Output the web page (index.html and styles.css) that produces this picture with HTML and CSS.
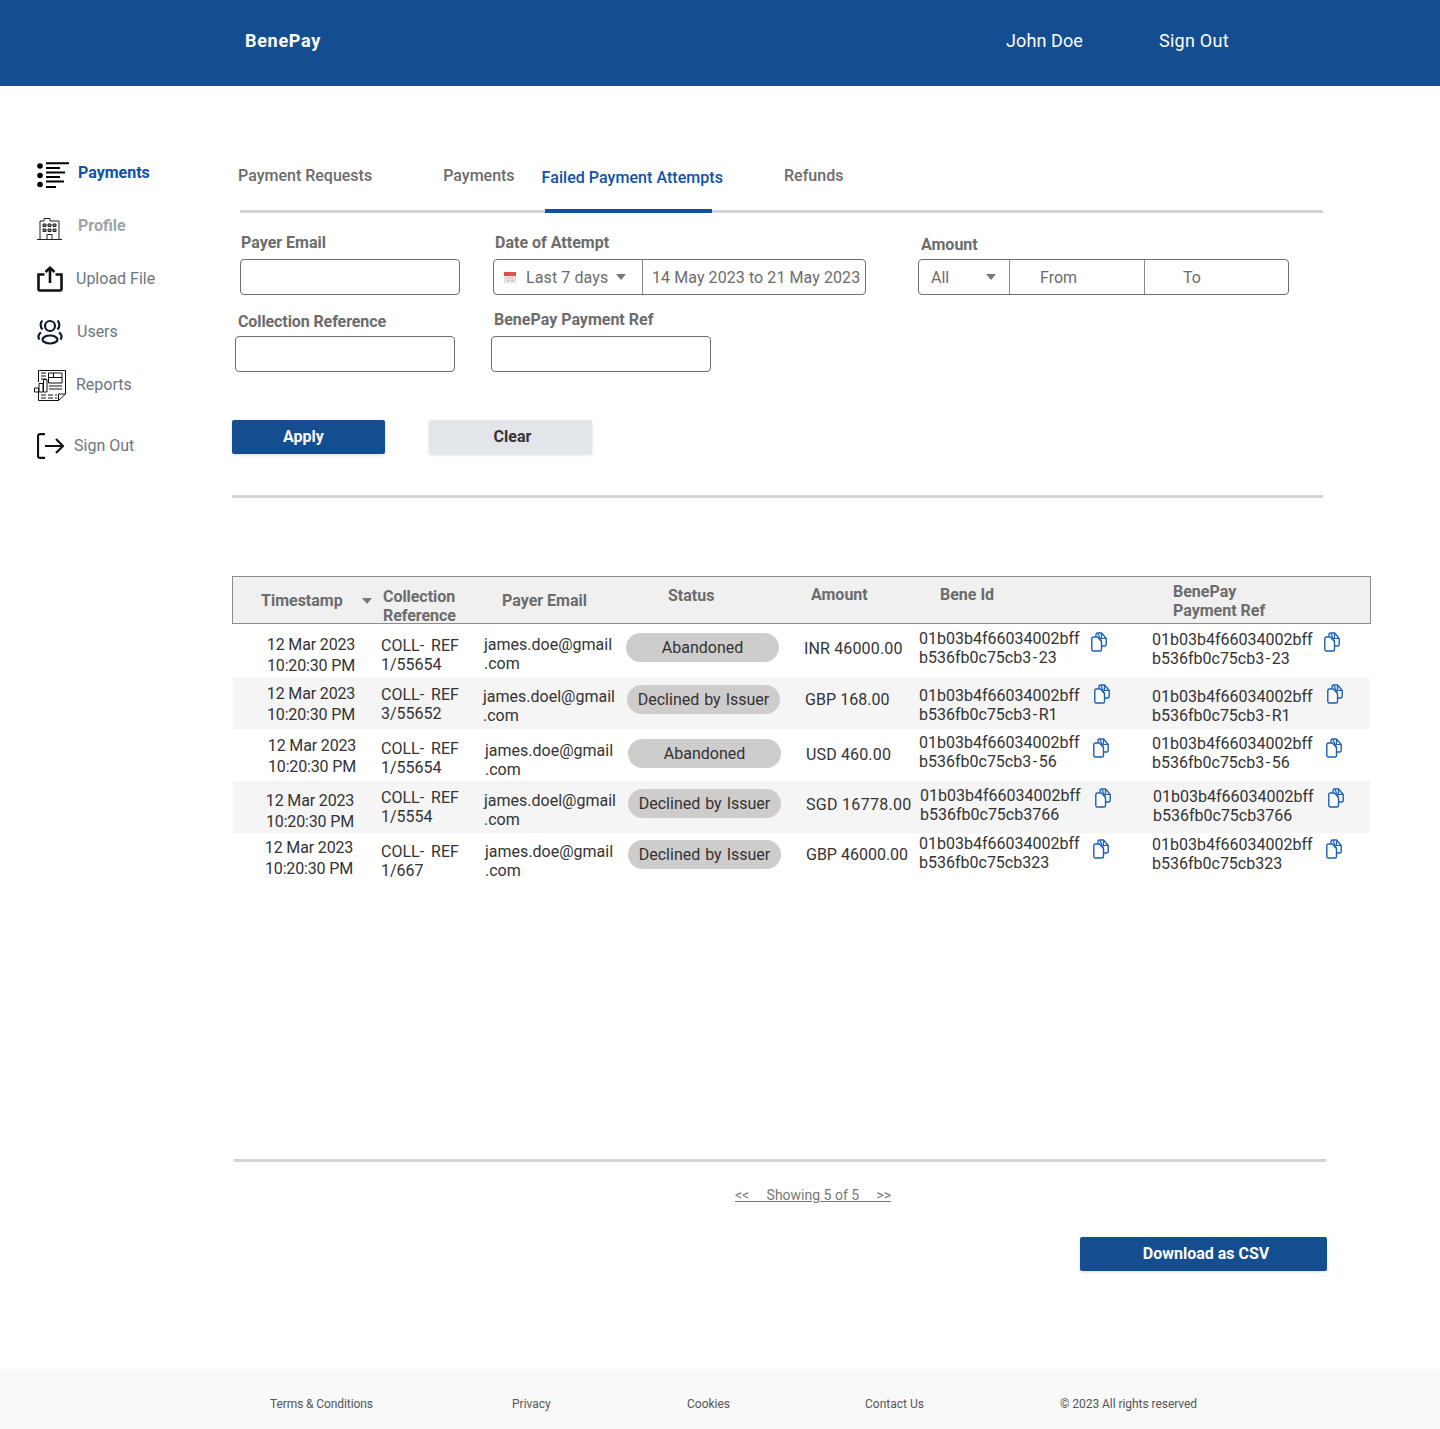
FILE: index.html
```html
<!DOCTYPE html>
<html lang="en">
<head>
    <meta charset="UTF-8">
    <meta name="viewport" content="width=device-width, initial-scale=1.0">
    <title>BenePay - Failed Payment Attempts</title>
    <link rel="stylesheet" href="styles.css">
</head>
<body>
    <svg class="defs" width="0" height="0">
        <symbol id="copy" viewBox="0 0 16 20">
            <path d="M5 4.500V2.500A1.500 1.500 0 0 1 6.500 1h4l4.700 5.500v6a1.500 1.500 0 0 1-1.500 1.500H11" fill="none" stroke="#1b5fb5" stroke-width="1.400"/>
            <path d="M2.300 5h4.200l4 4.500v8a1.500 1.500 0 0 1-1.500 1.500H2.300a1.500 1.500 0 0 1-1.500-1.500v-11A1.500 1.500 0 0 1 2.300 5z" fill="#fff" stroke="#1b5fb5" stroke-width="1.400"/>
            <path d="M7 1.500l3.500 8M10.500 1.500v5H15" fill="none" stroke="#1b5fb5" stroke-width="1.200"/>
        </symbol>
    </svg>

    <header class="topbar">
        <span class="brand">BenePay</span>
        <span class="user">John Doe</span>
        <span class="signout-top">Sign Out</span>
    </header>

    <div class="page">
        <!-- sidebar -->
        <nav class="sidebar">
            <a class="nav-item nav-payments">
                <svg class="nav-icon" width="32" height="27" viewBox="0 0 32 27">
                    <circle cx="3" cy="4" r="2.800"/><circle cx="3" cy="13.500" r="2.800"/><circle cx="3" cy="22.500" r="2.800"/>
                    <path d="M9 1.200h23M9 6h14M9 10.500h19M9 15h14M9 19.500h18M9 25h10" fill="none" stroke="#000" stroke-width="2"/>
                </svg>
                <span>Payments</span>
            </a>
            <a class="nav-item nav-profile">
                <svg class="nav-icon" width="26" height="24" viewBox="0 0 26 24" fill="none" stroke="#222" stroke-width="1">
                    <path d="M0 22.500h25M3 22.500V4h4V1.500h6V4h9v18.500M10 22.500v-5h5v5"/>
                    <path d="M6 7h3v2.500H6zM11 7h3v2.500h-3zM16 7h3v2.500h-3zM6 12h3v2.500H6zM11 12h3v2.500h-3zM16 12h3v2.500h-3z" fill="#888"/>
                </svg>
                <span>Profile</span>
            </a>
            <a class="nav-item nav-upload">
                <svg class="nav-icon" width="26" height="26" viewBox="0 0 26 26" fill="none" stroke="#111" stroke-width="2.600">
                    <path d="M7.500 8.500H1.500V23a1.500 1.500 0 0 0 1.500 1.500h20a1.500 1.500 0 0 0 1.500-1.500V8.500h-6"/>
                    <path d="M13 17V1.800M8.500 6L13 1.800 17.500 6"/>
                </svg>
                <span>Upload File</span>
            </a>
            <a class="nav-item nav-users">
                <svg class="nav-icon" width="26" height="26" viewBox="0 0 26 26" fill="none" stroke="#0f1a2c" stroke-width="2.200">
                    <circle cx="13" cy="7" r="5"/>
                    <ellipse cx="13" cy="20.500" rx="7.500" ry="4"/>
                    <path d="M5.500 1.500C3 3.500 3 8 5.500 10.500M20.500 1.500c2.500 2 2.500 6.500 0 9M4 13.500C1.500 15 .5 18 2.500 20.500M22 13.500c2.500 1.500 3.500 4.500 1.500 7"/>
                </svg>
                <span>Users</span>
            </a>
            <a class="nav-item nav-reports">
                <svg class="nav-icon" width="32" height="31" viewBox="0 0 32 31" fill="none" stroke="#111" stroke-width="1">
                    <path d="M4.500 12V.5h27V24l-7 6.500H4.500V22"/>
                    <path d="M24.500 30.500V24h7"/>
                    <path d="M14.500 3h13.500v10H14.500zM14.500 7.500h13.500M19.500 3v4.500M7 3h5M7 6h5M7 9h5M15 16h13M15 19h13"/>
                    <path d="M.5 18h4v4h-4zM5 13.500h4V22H5zM9.500 9.500h3.500V22H9.500z"/>
                    <path d="M7 25h5M14 25h5M21 25h2M7 28h5M14 28h5M21 28h2"/>
                </svg>
                <span>Reports</span>
            </a>
            <a class="nav-item nav-signout">
                <svg class="nav-icon" width="27" height="26" viewBox="0 0 27 26" fill="none" stroke="#111" stroke-width="2.200">
                    <path d="M8 1.100H3a2 2 0 0 0-2 2v19.800a2 2 0 0 0 2 2h5"/>
                    <path d="M8 13h17.500M19 6l7 7-7 7"/>
                </svg>
                <span>Sign Out</span>
            </a>
        </nav>

        <main class="content">
            <!-- tabs -->
            <div class="tabs">
                <a class="tab tab-requests">Payment Requests</a>
                <a class="tab tab-payments">Payments</a>
                <a class="tab tab-failed">Failed Payment Attempts</a>
                <a class="tab tab-refunds">Refunds</a>
            </div>
            <div class="tab-line"><div class="tab-line-active"></div></div>

            <!-- filters -->
            <div class="filter-row filter-row-one">
                <div class="field field-email">
                    <label>Payer Email</label>
                    <input class="text-input" type="text">
                </div>
                <div class="field field-date">
                    <label>Date of Attempt</label>
                    <div class="combo combo-date">
                        <div class="combo-part date-range">
                            <svg width="12" height="12" viewBox="0 0 12 12">
                                <rect x="0" y="1" width="12" height="11" fill="#e6e2e2"/>
                                <rect x="0" y="1" width="12" height="4" fill="#d9534f"/>
                                <path d="M3 7h2M7 7h2M3 9.500h2M7 9.500h2" stroke="#bbb" stroke-width="1"/>
                            </svg>
                            <span>Last 7 days</span>
                            <i class="caret"></i>
                        </div>
                        <div class="combo-part date-text">14 May 2023 to 21 May 2023</div>
                    </div>
                </div>
                <div class="field field-amount">
                    <label>Amount</label>
                    <div class="combo combo-amount">
                        <div class="combo-part amount-all"><span>All</span><i class="caret"></i></div>
                        <div class="combo-part amount-from">From</div>
                        <div class="combo-part amount-to">To</div>
                    </div>
                </div>
            </div>
            <div class="filter-row filter-row-two">
                <div class="field field-coll">
                    <label>Collection Reference</label>
                    <input class="text-input" type="text">
                </div>
                <div class="field field-ref">
                    <label>BenePay Payment Ref</label>
                    <input class="text-input" type="text">
                </div>
            </div>

            <div class="actions">
                <button class="btn btn-primary btn-apply">Apply</button>
                <button class="btn btn-light btn-clear">Clear</button>
            </div>
            <div class="divider divider-filters"></div>

            <!-- table -->
            <div class="table">
                <div class="thead">
                    <div class="th th-time">Timestamp<i class="caret"></i></div>
                    <div class="th th-coll">Collection<br>Reference</div>
                    <div class="th th-email">Payer Email</div>
                    <div class="th th-status">Status</div>
                    <div class="th th-amount">Amount</div>
                    <div class="th th-bene">Bene Id</div>
                    <div class="th th-ref">BenePay<br>Payment Ref</div>
                </div>

                <div class="row row-1">
                    <div class="cell time">12 Mar 2023<br>10:20:30 PM</div>
                    <div class="cell coll">COLL- REF<br>1/55654</div>
                    <div class="cell email">james.doe@gmail<br>.com</div>
                    <div class="cell status"><span class="pill">Abandoned</span></div>
                    <div class="cell amount">INR 46000.00</div>
                    <div class="cell bene"><span class="id">01b03b4f66034002bff<br>b536fb0c75cb3<span class="hy">-</span>23</span><svg class="copy"><use href="#copy"/></svg></div>
                    <div class="cell ref"><span class="id">01b03b4f66034002bff<br>b536fb0c75cb3<span class="hy">-</span>23</span><svg class="copy"><use href="#copy"/></svg></div>
                </div>
                <div class="row row-2 row-shaded">
                    <div class="cell time">12 Mar 2023<br>10:20:30 PM</div>
                    <div class="cell coll">COLL- REF<br>3/55652</div>
                    <div class="cell email">james.doel@gmail<br>.com</div>
                    <div class="cell status"><span class="pill">Declined by Issuer</span></div>
                    <div class="cell amount">GBP 168.00</div>
                    <div class="cell bene"><span class="id">01b03b4f66034002bff<br>b536fb0c75cb3<span class="hy">-</span>R1</span><svg class="copy"><use href="#copy"/></svg></div>
                    <div class="cell ref"><span class="id">01b03b4f66034002bff<br>b536fb0c75cb3<span class="hy">-</span>R1</span><svg class="copy"><use href="#copy"/></svg></div>
                </div>
                <div class="row row-3">
                    <div class="cell time">12 Mar 2023<br>10:20:30 PM</div>
                    <div class="cell coll">COLL- REF<br>1/55654</div>
                    <div class="cell email">james.doe@gmail<br>.com</div>
                    <div class="cell status"><span class="pill">Abandoned</span></div>
                    <div class="cell amount">USD 460.00</div>
                    <div class="cell bene"><span class="id">01b03b4f66034002bff<br>b536fb0c75cb3<span class="hy">-</span>56</span><svg class="copy"><use href="#copy"/></svg></div>
                    <div class="cell ref"><span class="id">01b03b4f66034002bff<br>b536fb0c75cb3<span class="hy">-</span>56</span><svg class="copy"><use href="#copy"/></svg></div>
                </div>
                <div class="row row-4 row-shaded">
                    <div class="cell time">12 Mar 2023<br>10:20:30 PM</div>
                    <div class="cell coll">COLL- REF<br>1/5554</div>
                    <div class="cell email">james.doel@gmail<br>.com</div>
                    <div class="cell status"><span class="pill">Declined by Issuer</span></div>
                    <div class="cell amount">SGD 16778.00</div>
                    <div class="cell bene"><span class="id">01b03b4f66034002bff<br>b536fb0c75cb3766</span><svg class="copy"><use href="#copy"/></svg></div>
                    <div class="cell ref"><span class="id">01b03b4f66034002bff<br>b536fb0c75cb3766</span><svg class="copy"><use href="#copy"/></svg></div>
                </div>
                <div class="row row-5">
                    <div class="cell time">12 Mar 2023<br>10:20:30 PM</div>
                    <div class="cell coll">COLL- REF<br>1/667</div>
                    <div class="cell email">james.doe@gmail<br>.com</div>
                    <div class="cell status"><span class="pill">Declined by Issuer</span></div>
                    <div class="cell amount">GBP 46000.00</div>
                    <div class="cell bene"><span class="id">01b03b4f66034002bff<br>b536fb0c75cb323</span><svg class="copy"><use href="#copy"/></svg></div>
                    <div class="cell ref"><span class="id">01b03b4f66034002bff<br>b536fb0c75cb323</span><svg class="copy"><use href="#copy"/></svg></div>
                </div>
            </div>

            <div class="divider divider-table"></div>
            <div class="pager"><a>&lt;&lt;&nbsp;&nbsp;&nbsp;&nbsp;&nbsp;Showing 5 of 5&nbsp;&nbsp;&nbsp;&nbsp;&nbsp;&gt;&gt;</a></div>
            <div class="download">
                <button class="btn btn-primary btn-download">Download as CSV</button>
            </div>
        </main>
    </div>

    <footer class="footer">
        <a class="foot-terms">Terms &amp; Conditions</a>
        <a class="foot-privacy">Privacy</a>
        <a class="foot-cookies">Cookies</a>
        <a class="foot-contact">Contact Us</a>
        <span class="foot-copy">&copy; 2023 All rights reserved</span>
    </footer>
</body>
</html>
```

FILE: styles.css
```css
/* base */
body {
    margin: 0;
    font-family: Roboto, "Liberation Sans", sans-serif;
    font-size: 16px;
    color: #333;
    background-color: #fff;
}
.defs {
    display: block;
    height: 0;
}

/* top bar */
.topbar {
    display: flex;
    align-items: center;
    height: 86px;
    padding: 0 0 6px 245px;
    box-sizing: border-box;
    background-color: #154e90;
    color: #fff;
    font-size: 18px;
}
.brand {
    font-weight: 700;
    width: 761px;
    letter-spacing: 0.7px;
}
.user {
    width: 153px;
    letter-spacing: 0.1px;
}
.signout-top {
    letter-spacing: 0.25px;
}

/* page layout */
.page {
    display: flex;
    height: 1283px;
}

/* sidebar */
.sidebar {
    width: 232px;
    flex-shrink: 0;
    padding: 60px 0 0 37px;
    box-sizing: border-box;
}
.nav-item {
    display: flex;
    align-items: center;
    height: 53px;
    color: #6c757d;
}
.nav-icon {
    flex-shrink: 0;
}
.nav-payments {
    color: #0d52a8;
    font-weight: 700;
}
.nav-payments .nav-icon {
    margin-top: 5px;
}
.nav-payments span {
    margin: 0 0 1px 9px;
}
.nav-profile {
    color: #a0a4a8;
    font-weight: 700;
}
.nav-profile span {
    margin: 0 0 0 15px;
}
.nav-profile .nav-icon {
    margin: 7px 0 0 0;
}
.nav-upload span {
    margin-left: 13px;
}
.nav-users span {
    margin-left: 14px;
}
.nav-reports .nav-icon {
    margin-left: -3px;
    margin-top: 2px;
}
.nav-reports span {
    margin-left: 10px;
}
.nav-signout {
    margin-top: 8px;
}
.nav-signout span {
    margin-left: 10px;
}

/* tabs */
.content {
    flex: 1;
}
.tabs {
    display: flex;
    align-items: center;
    height: 40px;
    margin-top: 69px;
    color: #6c6c6c;
    font-weight: 500;
}
.tab-requests {
    margin-left: 6px;
}
.tab-payments {
    margin-left: 71px;
}
.tab-failed {
    margin: 4px 0 0 27px;
    color: #0d52a8;
    letter-spacing: 0.05px;
}
.tab-refunds {
    margin-left: 61px;
}
.tab-line {
    width: 1083px;
    height: 3px;
    margin: 15px 0 0 8px;
    background-color: #d3d5d8;
}
.tab-line-active {
    width: 167px;
    height: 4px;
    margin-left: 305px;
    position: relative;
    top: -1px;
    background-color: #0d52a8;
}

/* filters */
.filter-row {
    display: flex;
    align-items: flex-end;
}
.filter-row-one {
    margin-top: 20px;
}
.filter-row-two {
    margin-top: 15px;
}
.field {
    display: flex;
    flex-direction: column;
}
.field label {
    line-height: 19px;
    font-weight: 700;
    color: #6c6c6c;
    margin-bottom: 7px;
}
.field-email {
    margin-left: 8px;
}
.field-email label {
    margin-left: 1px;
}
.field-date {
    margin-left: 33px;
}
.field-date label {
    margin-left: 2px;
}
.field-amount {
    margin-left: 52px;
}
.field-amount label {
    margin: 0 0 5px 3px;
}
.field-coll {
    margin-left: 3px;
}
.field-coll label {
    margin: 0 0 5px 3px;
    letter-spacing: -0.1px;
}
.field-ref {
    margin-left: 36px;
}
.field-ref label {
    margin-left: 3px;
}
.text-input {
    display: block;
    width: 220px;
    height: 36px;
    padding: 0;
    box-sizing: border-box;
    border: 1px solid #6f6f6f;
    border-radius: 4px;
    background-color: #fff;
}
.combo {
    display: flex;
    height: 36px;
    box-sizing: border-box;
    border: 1px solid #6f6f6f;
    border-radius: 4px;
    color: #6c6c6c;
}
.combo-part {
    display: flex;
    align-items: center;
    box-sizing: border-box;
    border-right: 1px solid #8a8a8a;
}
.combo-part:last-child {
    border-right: none;
}
.combo-date {
    width: 373px;
}
.date-range {
    width: 149px;
    padding-left: 10px;
}
.date-range span {
    margin-left: 10px;
    letter-spacing: 0.1px;
}
.date-range .caret {
    margin-left: 8px;
}
.date-text {
    padding-left: 9px;
    white-space: nowrap;
    letter-spacing: 0.08px;
}
.combo-amount {
    width: 371px;
}
.amount-all {
    width: 91px;
    padding-left: 12px;
}
.amount-all .caret {
    margin-left: 37px;
}
.amount-from {
    width: 135px;
    padding-left: 30px;
}
.amount-to {
    padding-left: 38px;
}
.caret {
    display: inline-block;
    width: 0;
    height: 0;
    border-left: 5px solid transparent;
    border-right: 5px solid transparent;
    border-top: 6px solid #777;
}

/* buttons */
.btn {
    display: block;
    height: 34px;
    padding: 0 0 2px 0;
    border: none;
    border-radius: 2px;
    font-family: inherit;
    font-size: 16px;
    font-weight: 700;
    box-shadow: 0 1px 3px rgba(0,0,0,0.15);
}
.btn-primary {
    background-color: #154e90;
    color: #fff;
}
.btn-light {
    background-color: #e2e6ea;
    color: #333;
}
.actions {
    display: flex;
    margin-top: 48px;
}
.btn-apply {
    width: 153px;
    padding-right: 10px;
}
.btn-clear {
    width: 163px;
    margin-left: 44px;
    padding-left: 4px;
}
.divider {
    height: 3px;
    background-color: #d3d3d3;
}
.divider-filters {
    width: 1091px;
    margin-top: 41px;
}

/* table */
.table {
    width: 1137px;
    margin: 78px 0 0 1px;
}
.thead,
.row {
    display: grid;
    grid-template-columns: 148px 103px 142px 178px 115px 233px 218px;
    box-sizing: border-box;
}
.thead {
    height: 48px;
    background-color: #f0f0f0;
    border: 1px solid #8c8c8c;
    margin-left: -1px;
    width: 1139px;
    color: #6c6c6c;
    font-weight: 700;
    line-height: 19px;
}
.th-time {
    display: flex;
    align-items: center;
    height: 19px;
    margin: 14px 0 0 28px;
}
.th-time .caret {
    margin-left: 19px;
}
.th-coll {
    margin: 10px 0 0 2px;
    letter-spacing: -0.05px;
}
.th-email {
    margin: 14px 0 0 18px;
}
.th-status {
    margin: 9px 0 0 42px;
}
.th-amount {
    margin: 8px 0 0 7px;
}
.th-bene {
    margin: 8px 0 0 21px;
}
.th-ref {
    margin: 5px 0 0 21px;
}
.row {
    line-height: 19px;
    white-space: nowrap;
}
.row-1 {
    height: 54px;
}
.row-2 {
    height: 51px;
}
.row-3 {
    height: 52px;
}
.row-4 {
    height: 52px;
}
.row-5 {
    height: 52px;
}
.row-shaded {
    background-color: #f5f5f5;
}
.time {
    line-height: 21px;
    text-align: center;
    width: 90px;
    letter-spacing: -0.15px;
}
.coll {
    word-spacing: 3px;
}
.amount {
    letter-spacing: 0.15px;
}
.row-2 .amount {
    letter-spacing: 0.05px;
}
.row-4 .amount {
    letter-spacing: 0.3px;
}
.row-5 .amount {
    letter-spacing: 0;
}
.pill {
    display: block;
    width: 153px;
    height: 29px;
    border-radius: 15px;
    background-color: #cfcccc;
    line-height: 29px;
    text-align: center;
    word-spacing: 1px;
}
.bene,
.ref {
    display: flex;
    align-items: flex-start;
}
.hy {
    margin: 0 1.5px;
}
.copy {
    width: 16px;
    height: 20px;
    flex-shrink: 0;
}

/* cell offsets, the rows do not line up exactly */
.row-1 .time { margin: 10px 0 0 33px; }
.row-1 .coll { margin: 12px 0 0 0; }
.row-1 .email { margin: 11px 0 0 0; }
.row-1 .status { margin: 9px 0 0 0; }
.row-1 .amount { margin: 15px 0 0 0; }
.row-1 .bene { margin: 5px 0 0 0; }
.row-1 .ref { margin: 6px 0 0 0; }
.row-1 .copy { margin: 3px 0 0 11px; }
.row-1 .ref .copy { margin-top: 2px; }

.row-2 .time { margin: 5px 0 0 33px; }
.row-2 .coll { margin: 7px 0 0 0; }
.row-2 .email { margin: 9px 0 0 -1px; }
.row-2 .status { margin: 7px 0 0 1px; }
.row-2 .amount { margin: 12px 0 0 1px; }
.row-2 .bene { margin: 8px 0 0 0; }
.row-2 .ref { margin: 9px 0 0 0; }
.row-2 .copy { margin: -2px 0 0 14px; }
.row-2 .ref .copy { margin-top: -3px; }

.row-3 .time { margin: 6px 0 0 34px; }
.row-3 .coll { margin: 10px 0 0 0; }
.row-3 .email { margin: 12px 0 0 1px; }
.row-3 .status { margin: 10px 0 0 2px; }
.row-3 .amount { margin: 16px 0 0 2px; }
.row-3 .bene { margin: 4px 0 0 0; }
.row-3 .ref { margin: 5px 0 0 0; }
.row-3 .copy { margin: 5px 0 0 13px; }
.row-3 .ref .copy { margin-top: 4px; }

.row-4 .time { margin: 9px 0 0 32px; }
.row-4 .coll { margin: 7px 0 0 0; }
.row-4 .email { margin: 10px 0 0 0; }
.row-4 .status { margin: 8px 0 0 2px; }
.row-4 .amount { margin: 14px 0 0 2px; }
.row-4 .bene { margin: 5px 0 0 1px; }
.row-4 .ref { margin: 6px 0 0 1px; }
.row-4 .copy { margin: 2px 0 0 14px; }
.row-4 .ref .copy { margin-top: 1px; }

.row-5 .time { margin: 4px 0 0 31px; }
.row-5 .coll { margin: 9px 0 0 0; }
.row-5 .email { margin: 9px 0 0 1px; }
.row-5 .status { margin: 7px 0 0 2px; }
.row-5 .amount { margin: 12px 0 0 2px; }
.row-5 .bene { margin: 1px 0 0 0; }
.row-5 .ref { margin: 2px 0 0 0; }
.row-5 .copy { margin: 5px 0 0 13px; }
.row-5 .ref .copy { margin-top: 4px; }

/* pager + csv */
.divider-table {
    width: 1092px;
    margin: 274px 0 0 2px;
}
.pager {
    margin: 25px 0 0 503px;
    font-size: 14px;
    line-height: 17px;
    color: #777;
}
.pager a {
    text-decoration: underline;
}
.download {
    margin: 33px 0 0 848px;
}
.btn-download {
    width: 247px;
    padding-left: 5px;
}

/* footer */
.footer {
    display: flex;
    align-items: center;
    height: 60px;
    padding: 10px 0 0 270px;
    box-sizing: border-box;
    background-color: #f9f9f9;
    color: #555;
    font-size: 12px;
}
.foot-terms {
    width: 242px;
    letter-spacing: -0.1px;
}
.foot-privacy {
    width: 175px;
}
.foot-cookies {
    width: 178px;
}
.foot-contact {
    width: 195px;
}
.foot-copy {
    letter-spacing: -0.05px;
}
```
